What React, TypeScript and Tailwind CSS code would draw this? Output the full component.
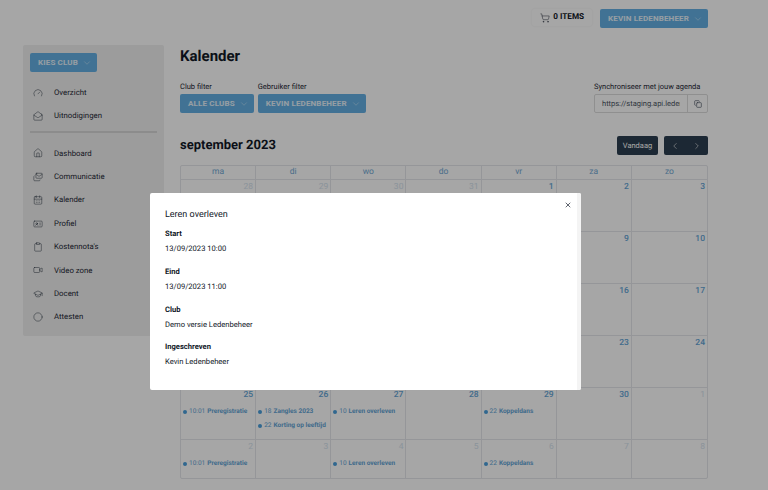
import React from "react";
import { ShoppingCart, ChevronDown, ChevronLeft, ChevronRight, Copy, X, Mails, CalendarDays, IdCard, Clipboard, Video, Home, MailOpen, Circle, Gauge, GraduationCap } from "lucide-react";

const font = { fontFamily: "Roboto, sans-serif" };

function BlueBtn({ label }: { label: string }) {
  return (
    <button className="flex h-[19px] items-center gap-[4px] rounded-[2px] bg-[#64b0e4] pl-2 pr-[5px] text-[8px] font-bold tracking-[0.15px] text-white/85">
      {label}
      <ChevronDown size={10} strokeWidth={1} />
    </button>
  );
}

type IconT = React.ComponentType<{ size?: number; strokeWidth?: number }>;
const nav1: { l: string; I: IconT }[] = [
  { l: "Overzicht", I: Gauge },
  { l: "Uitnodigingen", I: MailOpen },
];
const nav2: { l: string; I: IconT }[] = [
  { l: "Dashboard", I: Home },
  { l: "Communicatie", I: Mails },
  { l: "Kalender", I: CalendarDays },
  { l: "Profiel", I: IdCard },
  { l: "Kostennota's", I: Clipboard },
  { l: "Video zone", I: Video },
  { l: "Docent", I: GraduationCap },
  { l: "Attesten", I: Circle },
];

function NavRow({ l, I }: { l: string; I: IconT }) {
  return (
    <div className="flex h-[23.4px] items-center text-[7.8px] text-[#1f2937]">
      <span className="ml-[2px] flex w-[22px] justify-start pl-[1px]"><I size={10} strokeWidth={1.1} /></span>
      <span>{l}</span>
    </div>
  );
}

type Ev = { t: string; n: string };
type Cell = { d: number; muted?: boolean; ev?: Ev[] };
const rows: Cell[][] = [
  [{ d: 28, muted: true }, { d: 29, muted: true }, { d: 30, muted: true }, { d: 31, muted: true }, { d: 1 }, { d: 2 }, { d: 3 }],
  [{ d: 4 }, { d: 5 }, { d: 6 }, { d: 7 }, { d: 8 }, { d: 9 }, { d: 10 }],
  [{ d: 11 }, { d: 12 }, { d: 13 }, { d: 14 }, { d: 15 }, { d: 16 }, { d: 17 }],
  [{ d: 18 }, { d: 19 }, { d: 20 }, { d: 21 }, { d: 22 }, { d: 23 }, { d: 24 }],
  [
    { d: 25, ev: [{ t: "10:01", n: "Preregistratie" }] },
    { d: 26, ev: [{ t: "18", n: "Zangles 2023" }, { t: "22", n: "Korting op leeftijd" }] },
    { d: 27, ev: [{ t: "10", n: "Leren overleven" }] },
    { d: 28 },
    { d: 29, ev: [{ t: "22", n: "Koppeldans" }] },
    { d: 30 },
    { d: 1, muted: true },
  ],
  [
    { d: 2, muted: true, ev: [{ t: "10:01", n: "Preregistratie" }] },
    { d: 3, muted: true },
    { d: 4, muted: true, ev: [{ t: "10", n: "Leren overleven" }] },
    { d: 5, muted: true },
    { d: 6, muted: true, ev: [{ t: "22", n: "Koppeldans" }] },
    { d: 7, muted: true },
    { d: 8, muted: true },
  ],
];

function Calendar() {
  return (
    <div className="mt-[10px] overflow-hidden rounded-[2px] border border-[#e5e7eb]">
      <div className="grid h-[13px] grid-cols-7">
        {["ma", "di", "wo", "do", "vr", "za", "zo"].map((d) => (
          <div key={d} className="flex items-center justify-center border-r border-[#e5e7eb] text-[8.5px] text-[#72a9d4] last:border-r-0">{d}</div>
        ))}
      </div>
      {rows.map((r, i) => (
        <div key={i} className={`grid grid-cols-7 border-t border-[#e5e7eb] ${i === 5 ? "h-[39px]" : "h-[52px]"}`}>
          {r.map((c, j) => (
            <div key={j} className="border-r border-[#e5e7eb] pt-[1px] last:border-r-0">
              <div className={`pr-[2px] text-right text-[8.5px] leading-[12px] ${c.muted ? "text-[#d5e3ee]" : "font-medium text-[#64a4d6]"}`}>{c.d}</div>
              <div className="mt-[6px] flex flex-col gap-[3.2px]">
                {c.ev?.map((e) => (
                  <div key={e.n} className="flex h-[10.5px] items-center whitespace-nowrap pl-[2px] text-[6.5px] text-[#64a4d6]">
                    <span className="mr-[2px] h-[4px] w-[4px] rounded-full bg-[#4a9fdc]" />
                    <span className="mr-[2px]">{e.t}</span>
                    <span className="font-bold">{e.n}</span>
                  </div>
                ))}
              </div>
            </div>
          ))}
        </div>
      ))}
    </div>
  );
}

export default function App() {
  return (
    <div className="relative h-[490px] w-[768px] overflow-hidden bg-white antialiased [text-rendering:geometricPrecision]" style={font}>
      <header className="flex h-[36px] items-start justify-end gap-2 pr-[60px] pt-[9px]">
        <div className="flex h-[17px] items-center gap-[3px] rounded-[2px] px-2 text-[8.2px] font-bold text-[#111827] shadow-[0_0_2px_rgba(0,0,0,0.08)]">
          <ShoppingCart size={10} strokeWidth={1.1} />
          0 ITEMS
        </div>
        <BlueBtn label="KEVIN LEDENBEHEER" />
      </header>

      <div className="flex items-start gap-4 pl-[23px] pr-[60px] pt-[9px]">
        <aside className="h-[291px] w-[141px] shrink-0 rounded-[2px] bg-[#f0f0f0] px-[7px] pt-2">
          <BlueBtn label="KIES CLUB" />
          <div className="mt-[9px]">
            {nav1.map((n) => <NavRow key={n.l} {...n} />)}
          </div>
          <div className="mb-[7px] mt-[3px] h-[2px] bg-[#d8d8d8]" />
          <div className="pt-[2px]">
            {nav2.map((n) => <NavRow key={n.l} {...n} />)}
          </div>
        </aside>

        <main className="min-w-0 flex-1">
          <h1 className="pt-[1px] text-[15px] font-bold leading-[20px] text-[#111827]">Kalender</h1>
          <div className="mt-[16px] flex items-end justify-between">
            <div className="flex gap-1">
              <div>
                <div className="mb-[2px] text-[7.5px] leading-[10px] text-[#1f2937]">Club filter</div>
                <BlueBtn label="ALLE CLUBS" />
              </div>
              <div>
                <div className="mb-[2px] text-[7.5px] leading-[10px] text-[#1f2937]">Gebruiker filter</div>
                <BlueBtn label="KEVIN LEDENBEHEER" />
              </div>
            </div>
            <div>
              <div className="mb-[2px] text-[7.5px] leading-[10px] text-[#1f2937]">Synchroniseer met jouw agenda</div>
              <div className="flex h-[19px] w-[114px] overflow-hidden rounded-[2px] border border-[#dcdcdc] text-[7.5px] text-[#4b5563]">
                <div className="mx-[7px] flex-1 overflow-hidden whitespace-nowrap leading-[17px]">https://staging.api.ledenbeheer.be</div>
                <div className="flex w-[20px] shrink-0 items-center justify-center border-l border-[#dcdcdc]"><Copy size={8} /></div>
              </div>
            </div>
          </div>
          <div className="mt-[23px] flex h-[19px] items-center justify-between">
            <h2 className="text-[13px] font-bold text-[#111827]">september 2023</h2>
            <div className="flex gap-[6px]">
              <div className="flex h-[19px] w-[41px] items-center justify-center rounded-[2px] bg-[#2c3e50] text-[7.5px] text-white">Vandaag</div>
              <div className="flex h-[19px] w-[44px] items-center justify-around rounded-[2px] bg-[#2c3e50] text-white">
                <ChevronLeft size={10} strokeWidth={1.3} />
                <ChevronRight size={10} strokeWidth={1.3} />
              </div>
            </div>
          </div>
          <Calendar />
        </main>
      </div>

      <div className="absolute inset-0 flex items-start bg-black/35 pl-[150px] pt-[193px] backdrop-blur-[0.5px]">
        <div className="relative h-[197px] w-[431px] rounded-[2px] bg-white pl-[15px] pt-[16px] text-[#111827]">
          <div className="text-[9px] leading-[12px]">Leren overleven</div>
          <div className="mt-[5px]">
            {[
              ["Start", "13/09/2023 10:00"],
              ["Eind", "13/09/2023 11:00"],
              ["Club", "Demo versie Ledenbeheer"],
              ["Ingeschreven", "Kevin Ledenbeheer"],
            ].map(([a, b]) => (
              <div key={a} className="h-[37.8px] text-[7.6px] leading-[15px]">
                <div className="font-bold">{a}</div>
                <div>{b}</div>
              </div>
            ))}
          </div>
          <X size={8} className="absolute right-[9px] top-[8px]" />
          <div className="absolute bottom-0 right-0 top-0 w-[4px] rounded-r-[2px] bg-[#f4f4f4]" />
        </div>
      </div>
    </div>
  );
}
